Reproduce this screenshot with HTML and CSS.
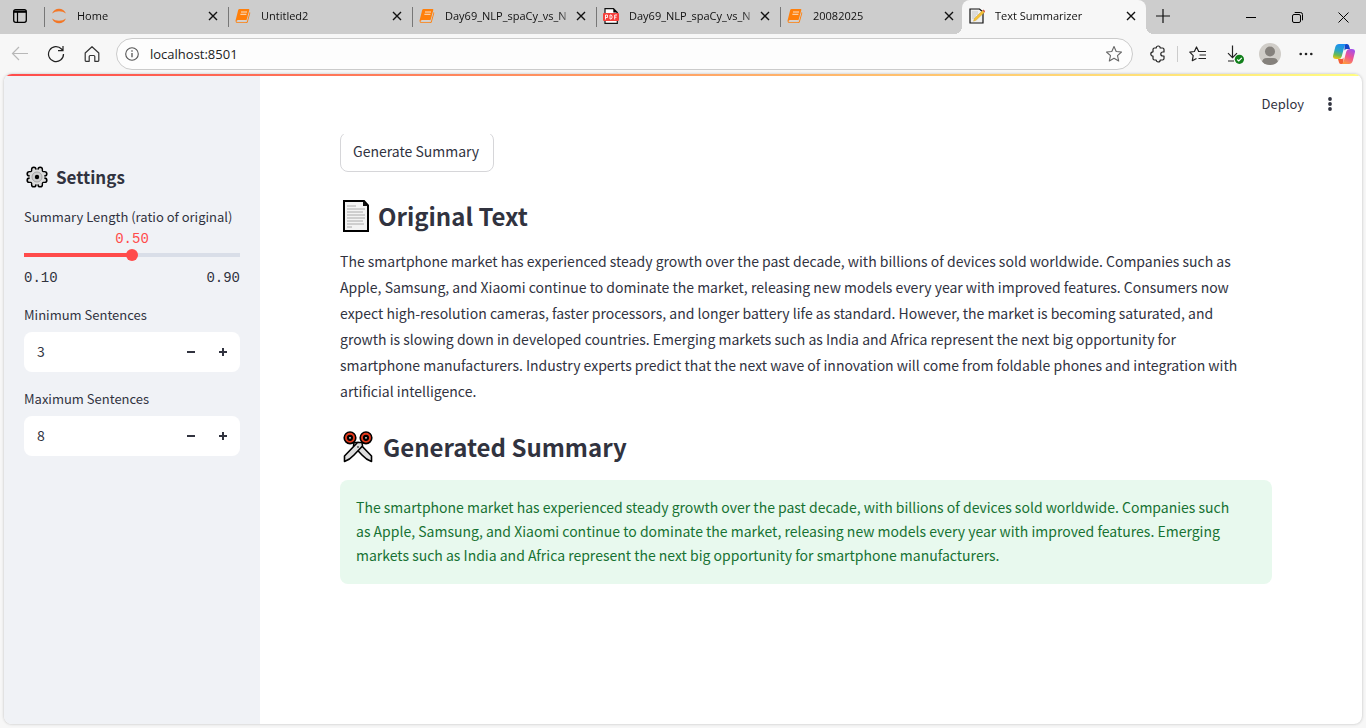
FILE: index.html
```html
<!DOCTYPE html>
<html lang="en">
<head>
<meta charset="utf-8">
<title>Text Summarizer</title>
<link rel="stylesheet" href="styles.css">
</head>
<body>
<svg class="defs" aria-hidden="true">
  <symbol id="x" viewBox="0 0 10 10"><path d="M1 1l8 8M9 1l-8 8" fill="none" stroke="#111" stroke-width="1.4"/></symbol>
  <symbol id="book" viewBox="0 0 16 16">
    <path d="M4.6 1h9q1 0 .7 1l-2.5 9.300q-.3.9-1.200.9H2.800q-1.300 0-1.300 1t1.200 1h8.300q.8 0 1-.8L14.700 4q.7.4.5 1.200L12.800 14q-.3 1-1.400 1H2.600Q.4 15 .5 12.800L3.200 2.100Q3.500 1 4.600 1z" fill="#ff7f0a"/>
    <path d="M6 4h6M5.400 6.300h6" stroke="#fbe3ca" stroke-width="1"/>
    <path d="M2.500 12.600h8.300" stroke="#ddd" stroke-width=".8"/>
  </symbol>
</svg>
<div class="browser">
  <header class="tabstrip">
    <button class="icon-btn tab-menu" aria-label="Tab actions">
      <svg width="16" height="16" viewBox="0 0 16 16"><rect x="1.700" y="1.700" width="12.600" height="12.600" rx="2" fill="none" stroke="#000" stroke-width="1.300"/><path d="M1.700 2.500h12.600v2.300H1.700z"/><path d="M5.500 4v10" stroke="#000" stroke-width="1.200"/></svg>
    </button>
    <div class="tabs">
      <div class="tab">
        <svg class="favicon" viewBox="0 0 16 16"><path d="M1 5.600Q3.200.8 8 .8t7 4.800Q12 3.300 8 3.300T1 5.600zM1 10.400q2.200 4.800 7 4.800t7-4.800q-3 2.300-7 2.300t-7-2.300z" fill="#f37726"/></svg>
        <span class="tab-title">Home</span>
        <button class="tab-close" aria-label="Close Home"><svg width="10" height="10"><use href="#x"/></svg></button>
      </div>
      <div class="tab">
        <svg class="favicon"><use href="#book"/></svg>
        <span class="tab-title">Untitled2</span>
        <button class="tab-close" aria-label="Close Untitled2"><svg width="10" height="10"><use href="#x"/></svg></button>
      </div>
      <div class="tab">
        <svg class="favicon"><use href="#book"/></svg>
        <span class="tab-title">Day69_NLP_spaCy_vs_N</span>
        <button class="tab-close" aria-label="Close Day69 notebook"><svg width="10" height="10"><use href="#x"/></svg></button>
      </div>
      <div class="tab">
        <svg class="favicon" viewBox="0 0 16 16"><path d="M2 .7h8.500L14.300 4.500v10.800H2z" fill="#fff" stroke="#111" stroke-width="1.200"/><path d="M10.300.5v4h4z"/><rect x="0" y="5" width="16" height="8" rx="1" fill="#f5403c"/><path d="M2.500 11.500v-4.500h2v2.500h-2M7 7v4h1l1-.8V7.800L8 7zM11.700 11.500V7H14M11.700 9.200h1.800" fill="none" stroke="#fff" stroke-width=".9"/></svg>
        <span class="tab-title">Day69_NLP_spaCy_vs_N</span>
        <button class="tab-close" aria-label="Close Day69 PDF"><svg width="10" height="10"><use href="#x"/></svg></button>
      </div>
      <div class="tab">
        <svg class="favicon"><use href="#book"/></svg>
        <span class="tab-title">20082025</span>
        <button class="tab-close" aria-label="Close 20082025"><svg width="10" height="10"><use href="#x"/></svg></button>
      </div>
      <div class="tab active">
        <svg class="favicon" viewBox="0 0 16 16"><path d="M1 1h9.500L14 4v11H1z" fill="#eee" stroke="#111" stroke-width="1.200"/><path d="M3 4h6M3 6h6M3 8h4M3 10h3" stroke="#bbb" stroke-width=".8"/><path d="M13.500 2.500l2 1.800-8.500 8-2.500.9.900-2.600z" fill="#f5c136" stroke="#c79a2c" stroke-width=".4"/><path d="M13.500 2.500l1-.9 2 1.800-1 .9z" fill="#d9584f"/></svg>
        <span class="tab-title">Text Summarizer</span>
        <button class="tab-close" aria-label="Close Text Summarizer"><svg width="10" height="10"><use href="#x"/></svg></button>
      </div>
    </div>
    <button class="icon-btn new-tab" aria-label="New tab"><svg width="14" height="14" viewBox="0 0 14 14"><path d="M7 0v14M0 7h14" stroke="#111" stroke-width="1.200"/></svg></button>
    <div class="window-controls">
      <button aria-label="Minimize"><svg width="10" height="10"><path d="M0 5.500h10" stroke="#000"/></svg></button>
      <button aria-label="Restore"><svg width="11" height="11" viewBox="0 0 11 11" fill="none" stroke="#000"><rect x=".5" y="2.500" width="8" height="8" rx="1.500"/><path d="M2.700.5H8.500q2 0 2 2v5.800"/></svg></button>
      <button aria-label="Close window"><svg width="11" height="11"><path d="M.5.5l10 10M10.500.5l-10 10" stroke="#000"/></svg></button>
    </div>
  </header>

  <nav class="toolbar">
    <button class="icon-btn" aria-label="Back"><svg width="18" height="16" viewBox="0 0 18 16" fill="none" stroke="#b8b8b8" stroke-width="1.200"><path d="M17 7.500H1.500M8 1L1.500 7.500 8 14"/></svg></button>
    <button class="icon-btn" aria-label="Refresh"><svg width="18" height="18" viewBox="0 0 18 18" fill="none" stroke="#222" stroke-width="1.200"><path d="M16.500 9A7.500 7.500 0 1 1 14.500 4L16 5.500M16 1v4.700h-5"/></svg></button>
    <button class="icon-btn" aria-label="Home page"><svg width="18" height="18" viewBox="0 0 18 18" fill="none" stroke="#333" stroke-width="1.200" stroke-linejoin="round"><path d="M2.200 8L9 1.700 15.800 8v7.500q0 .8-.8.8h-3.200v-4.800q0-1-1-1H7.200q-1 0-1 1v4.800H3q-.8 0-.8-.8z"/></svg></button>
    <div class="address">
      <svg width="14" height="14" viewBox="0 0 14 14"><circle cx="7" cy="7" r="6.300" fill="none" stroke="#555" stroke-width="1.100"/><path d="M7 6v4.300" stroke="#444" stroke-width="1.200"/><circle cx="7" cy="4" r=".8" fill="#444"/></svg>
      <input class="url" type="text" value="localhost:8501" aria-label="Address">
      <button class="star" aria-label="Add to favorites"><svg width="18" height="18" viewBox="0 0 18 18" fill="none" stroke="#666" stroke-width="1.100" stroke-linejoin="round"><path d="M9 1.500l2.200 5 5.300.5-4 3.600 1.200 5.400L9 13.200 4.300 16l1.200-5.400-4-3.600 5.300-.5z"/></svg></button>
    </div>
    <button class="icon-btn" aria-label="Extensions"><svg width="18" height="18" viewBox="0 0 18 18" fill="none" stroke="#222" stroke-width="1.200" stroke-linejoin="round"><path d="M4 4.500q0-1.500 1.500-1.500h1.700a2 2 0 0 1 4 0h2.300q1.500 0 1.500 1.500V7h-1.200a2 2 0 0 0 0 4H15v2.500q0 1.500-1.500 1.500h-2.300a2 2 0 0 1-4 0H5.500Q4 15 4 13.500V11.200a2.200 2.200 0 0 1 0-4.400z"/></svg></button>
    <span class="divider"></span>
    <button class="icon-btn" aria-label="Favorites"><svg width="18" height="18" viewBox="0 0 18 18" fill="none" stroke="#222" stroke-width="1.200" stroke-linejoin="round"><path d="M10 6.500H9.700L7.500 2 5.400 6.500l-4.600.7 3.400 3.500-.9 5L7.500 13.500M9 6.500h8M10.500 10H17M9.500 13.500H17"/></svg></button>
    <button class="icon-btn" aria-label="Downloads"><svg width="20" height="20" viewBox="0 0 20 20"><path d="M8.500 1.500v12M4 9.200l4.500 4.500L13 9.200M4 17h6" fill="none" stroke="#222" stroke-width="1.200"/><circle cx="15.400" cy="15.300" r="4.600" fill="#12801c"/><path d="M13.200 15.500l1.600 1.500 3-3.100" fill="none" stroke="#fff" stroke-width="1.200"/></svg></button>
    <button class="icon-btn" aria-label="Profile"><svg width="22" height="22" viewBox="0 0 22 22"><clipPath id="av"><circle cx="11" cy="11" r="11"/></clipPath><g clip-path="url(#av)"><path d="M0 0h22v22H0z" fill="#d0cdc8"/><circle cx="11" cy="8.500" r="5" fill="#85817c"/><path d="M3 22v-2q0-5 5-5h6q5 0 5 5v2z" fill="#85817c"/></g></svg></button>
    <button class="icon-btn" aria-label="More"><svg width="14" height="4" viewBox="0 0 14 4" fill="#222"><circle cx="1.700" cy="2" r="1.300"/><circle cx="7" cy="2" r="1.300"/><circle cx="12.300" cy="2" r="1.300"/></svg></button>
    <button class="icon-btn copilot" aria-label="Copilot"><svg width="22" height="20" viewBox="0 0 22 20">
      <defs>
        <linearGradient id="c1" x1=".5" y1="0" x2=".3" y2="1"><stop offset="0" stop-color="#1b8ef2"/><stop offset=".45" stop-color="#2ba6c4"/><stop offset=".75" stop-color="#6dbb4e"/><stop offset="1" stop-color="#f2c313"/></linearGradient>
        <linearGradient id="c2" x1=".8" y1="0" x2=".3" y2="1"><stop offset="0" stop-color="#a04ff0"/><stop offset=".5" stop-color="#ee5394"/><stop offset="1" stop-color="#ff9a3d"/></linearGradient>
      </defs>
      <path d="M11.500 0H14q1.500 0 2 1.600L17 5h-3.500q-1.500 0-2 1.500z" fill="#1546c8"/>
      <path d="M10.500 20H8q-1.500 0-2-1.600L5 15h3.500q1.500 0 2-1.500z" fill="#f35e36"/>
      <path d="M6 0h7.500q-1.500.3-2 2L8.700 12.500Q8 15 5.500 15H3Q-.8 15 .2 11.300l2-8Q3.200 0 6 0z" fill="url(#c1)"/>
      <path d="M16 20H8.500q1.500-.3 2-2l2.800-10.500Q14 5 16.500 5H19q3.800 0 2.800 3.700l-2 8Q18.800 20 16 20z" fill="url(#c2)"/>
    </svg></button>
  </nav>

  <div class="page">
    <div class="decoration"></div>
    <div class="app">
      <aside class="sidebar">
        <h2 class="side-title">
          <svg width="22" height="22" viewBox="0 0 22 22">
            <g stroke="#000" stroke-width="5.800" stroke-linecap="round"><path d="M7.800 3.300v15.400M14.200 3.300v15.400M3.300 7.800h15.400M3.300 14.200h15.400"/></g>
            <g stroke="#dcdcdc" stroke-width="3" stroke-linecap="round"><path d="M7.800 3.500v15M14.200 3.500v15M3.500 7.800h15M3.500 14.200h15"/></g>
            <circle cx="11" cy="11" r="7.500" fill="#dcdcdc"/><circle cx="11" cy="11" r="5" fill="#cfcfcf" stroke="#999" stroke-width=".8"/><circle cx="11" cy="11" r="2.200"/>
          </svg>
          Settings
        </h2>
        <label class="label" for="ratio">Summary Length (ratio of original)</label>
        <output class="slider-value" for="ratio">0.50</output>
        <input class="slider" id="ratio" type="range" min="0.10" max="0.90" step="0.05" value="0.50">
        <div class="slider-ends"><span>0.10</span><span>0.90</span></div>
        <label class="label" for="min">Minimum Sentences</label>
        <div class="number">
          <input id="min" type="number" value="3">
          <button aria-label="Decrease minimum"><svg width="8" height="8"><path d="M0 4h8" stroke="#31333f" stroke-width="2"/></svg></button>
          <button aria-label="Increase minimum"><svg width="8" height="8"><path d="M0 4h8M4 0v8" stroke="#31333f" stroke-width="2"/></svg></button>
        </div>
        <label class="label" for="max">Maximum Sentences</label>
        <div class="number">
          <input id="max" type="number" value="8">
          <button aria-label="Decrease maximum"><svg width="8" height="8"><path d="M0 4h8" stroke="#31333f" stroke-width="2"/></svg></button>
          <button aria-label="Increase maximum"><svg width="8" height="8"><path d="M0 4h8M4 0v8" stroke="#31333f" stroke-width="2"/></svg></button>
        </div>
      </aside>
      <div class="main">
        <div class="app-header">
          <button class="deploy">Deploy</button>
          <button class="kebab" aria-label="Main menu"><svg width="4" height="14" viewBox="0 0 4 14" fill="#31333f"><circle cx="2" cy="2" r="1.900"/><circle cx="2" cy="7" r="1.900"/><circle cx="2" cy="12" r="1.900"/></svg></button>
        </div>
        <main class="content">
          <button class="generate">Generate Summary</button>
          <h2 class="heading">
            <svg width="32" height="32" viewBox="0 0 32 32"><path d="M4 1h20l4 4.500V31H4z" fill="#f3f3f3" stroke="#000" stroke-width="2"/><path d="M23 1v5h5z" fill="#111"/><path d="M7 6h9M7 9h18M7 12h16M7 15h18M7 18h18M7 21h16M7 24h17M7 27h5" stroke="#aaa"/></svg>
            Original Text
          </h2>
          <p class="text">The smartphone market has experienced steady growth over the past decade, with billions of devices sold worldwide. Companies such as Apple, Samsung, and Xiaomi continue to dominate the market, releasing new models every year with improved features. Consumers now expect high-resolution cameras, faster processors, and longer battery life as standard. However, the market is becoming saturated, and growth is slowing down in developed countries. Emerging markets such as India and Africa represent the next big opportunity for smartphone manufacturers. Industry experts predict that the next wave of innovation will come from foldable phones and integration with artificial intelligence.</p>
          <h2 class="heading wide">
            <svg width="36" height="32" viewBox="0 0 36 32"><g fill="#ddd" stroke="#000" stroke-width="1.600" stroke-linejoin="round"><path d="M14 11.500h4.500L31.500 25v5.500Q26 28.500 22 24l-8.500-9z"/><path d="M22 11.500h-4.500L4.500 25v5.500Q10 28.500 14 24l8.500-9z"/></g><g fill="#e5391b" stroke="#000" stroke-width="1.600"><circle cx="10" cy="6.800" r="5.800"/><circle cx="26" cy="6.800" r="5.800"/></g><g fill="#eee" stroke="#000" stroke-width="2.200"><circle cx="10" cy="6.800" r="2"/><circle cx="26" cy="6.800" r="2"/></g><circle cx="18" cy="16" r="1" fill="#555"/></svg>
            Generated Summary
          </h2>
          <div class="success">The smartphone market has experienced steady growth over the past decade, with billions of devices sold worldwide. Companies such as Apple, Samsung, and Xiaomi continue to dominate the market, releasing new models every year with improved features. Emerging markets such as India and Africa represent the next big opportunity for smartphone manufacturers.</div>
        </main>
      </div>
    </div>
  </div>
</div>
</body>
</html>
```
FILE: styles.css
```css
* { box-sizing: border-box; }
body {
  margin: 0;
  background: #f7f7f7;
  color: #31333f;
  font-family: "Noto Sans CJK SC", "Open Sans", sans-serif;
  font-size: 14px;
}
button, input { font: inherit; color: inherit; }
button { border: 0; padding: 0; background: none; }
svg { display: block; flex: none; }
.defs { position: absolute; width: 0; height: 0; }

.browser {
  display: flex;
  flex-direction: column;
  height: 100vh;
  overflow: hidden;
}

.icon-btn {
  display: flex;
  flex: none;
  align-items: center;
  justify-content: center;
  width: 36px;
  height: 32px;
}

/* Tab strip */
.tabstrip {
  display: flex;
  flex: none;
  height: 34px;
  background: #cdcdcd;
  color: #111;
  font-family: "Open Sans", "Noto Sans", sans-serif;
  font-size: 11px;
}
.tab-menu { width: 40px; margin-right: 4px; }
.tabs { display: flex; min-width: 0; }
.tab {
  display: flex;
  align-items: center;
  flex: 0 1 184px;
  width: 184px;
  min-width: 0;
  padding: 0 10px 2px 7px;
  background: linear-gradient(#777, #777) 0 7px / 1px 20px no-repeat;
}
.tab.active {
  position: relative;
  margin-left: -2px;
  border-radius: 8px 8px 0 0;
  background: #f7f7f7;
}
.tab.active::before,
.tab.active::after {
  content: "";
  position: absolute;
  bottom: 0;
  width: 8px;
  height: 8px;
}
.tab.active::before {
  right: 100%;
  background: radial-gradient(circle at 0 0, transparent 8px, #f7f7f7 8px);
}
.tab.active::after {
  left: 100%;
  background: radial-gradient(circle at 100% 0, transparent 8px, #f7f7f7 8px);
}
.favicon { width: 16px; height: 16px; }
.tab-title {
  flex: 1;
  min-width: 0;
  margin-left: 10px;
  padding-bottom: 1px;
  overflow: hidden;
  white-space: nowrap;
  -webkit-mask-image: linear-gradient(to right, #000 88%, transparent);
  mask-image: linear-gradient(to right, #000 88%, transparent);
}
.tab-close {
  display: flex;
  align-items: center;
  justify-content: flex-end;
  width: 12px;
  height: 20px;
}
.new-tab { width: 34px; }
.window-controls { display: flex; margin-left: auto; }
.window-controls button {
  display: flex;
  align-items: center;
  justify-content: center;
  width: 46px;
}

/* Toolbar */
.toolbar {
  display: flex;
  flex: none;
  align-items: center;
  height: 40px;
  padding: 0 4px 0 2px;
}
.address {
  display: flex;
  flex: 1;
  align-items: center;
  height: 32px;
  margin: 0 7px 0 6px;
  padding: 0 9px 0 8px;
  border: 1px solid #cbcbcb;
  border-radius: 16px;
  background: #fdfdfd;
}
.url {
  flex: 1;
  min-width: 0;
  margin-left: 11px;
  padding: 0;
  border: 0;
  background: none;
  color: #222;
  font-family: "Open Sans", "Noto Sans", sans-serif;
  font-size: 13px;
}
.divider { width: 1px; height: 16px; margin: 0 2px 0 1px; background: #ccc; }
.copilot { margin-left: 2px; }

/* Page frame */
.page {
  display: flex;
  flex: 1;
  flex-direction: column;
  min-height: 0;
  margin: 0 4px 4px;
  overflow: hidden;
  border-radius: 8px;
  background: #fff;
  box-shadow: 0 0 3px #bbb;
}
.decoration {
  flex: none;
  height: 2px;
  background: linear-gradient(90deg, #ff4b4b, #fffd80);
}
.app { display: flex; flex: 1; min-height: 0; }

/* Sidebar */
.sidebar {
  display: flex;
  flex: none;
  flex-direction: column;
  width: 256px;
  padding: 88px 20px 20px;
  background: #f0f2f6;
}
.side-title {
  display: flex;
  align-items: center;
  gap: 8px;
  margin: 0 0 16px;
  padding-left: 2px;
  font-size: 17px;
  font-weight: 600;
  line-height: 26px;
}
.label { font-size: 13px; line-height: 22px; }
.slider-value {
  align-self: center;
  color: #ff4b4b;
  font-family: "Liberation Mono", monospace;
  font-size: 14px;
  line-height: 22px;
}
.slider {
  appearance: none;
  width: 100%;
  height: 12px;
  margin: -1px 0 0;
  background: linear-gradient(90deg, #ff4b4b 50%, #d9dee8 50%) center / 100% 4px no-repeat;
}
.slider::-webkit-slider-thumb {
  appearance: none;
  width: 12px;
  height: 12px;
  border-radius: 50%;
  background: #ff4b4b;
}
.slider-ends {
  display: flex;
  justify-content: space-between;
  margin: 7px 0 16px;
  font-family: "Liberation Mono", monospace;
  font-size: 14px;
  line-height: 20px;
}
.number {
  display: flex;
  height: 40px;
  margin: 6px 0 16px;
  overflow: hidden;
  border-radius: 8px;
  background: #fff;
}
.number input {
  flex: 1;
  min-width: 0;
  padding: 0 13px 2px;
  border: 0;
  background: none;
  appearance: textfield;
}
.number input::-webkit-inner-spin-button { display: none; }
.number button {
  display: flex;
  align-items: center;
  justify-content: center;
  width: 32px;
}
.number button:last-child { margin-right: 1px; }

/* Main */
.main { display: flex; flex: 1; flex-direction: column; min-width: 0; }
.app-header {
  display: flex;
  flex: none;
  align-items: center;
  justify-content: flex-end;
  gap: 10px;
  height: 58px;
  padding: 0 16px 2px 0;
}
.deploy { padding-bottom: 2px; font-size: 13px; }
.kebab {
  display: flex;
  align-items: center;
  justify-content: center;
  width: 32px;
  height: 32px;
}
.content {
  flex: 1;
  min-height: 0;
  padding: 0 90px 0 80px;
  overflow: hidden;
}
.generate {
  display: block;
  height: 40px;
  margin: -2px 0 27px;
  padding: 0 14px 2px 12px;
  border: 1px solid #d6d6d9;
  border-radius: 8px;
  background: #fff;
}
.heading {
  display: flex;
  align-items: center;
  gap: 6px;
  margin: 0 0 15px;
  font-size: 24px;
  font-weight: 600;
  line-height: 34px;
}
.heading.wide { gap: 7px; margin-bottom: 16px; }
.text {
  margin: 0 0 26px;
  padding-right: 16px;
  line-height: 26px;
}
.success {
  padding: 15px 28px 17px 16px;
  border-radius: 8px;
  background: #e8f9ee;
  color: #177233;
  line-height: 24px;
}
```
